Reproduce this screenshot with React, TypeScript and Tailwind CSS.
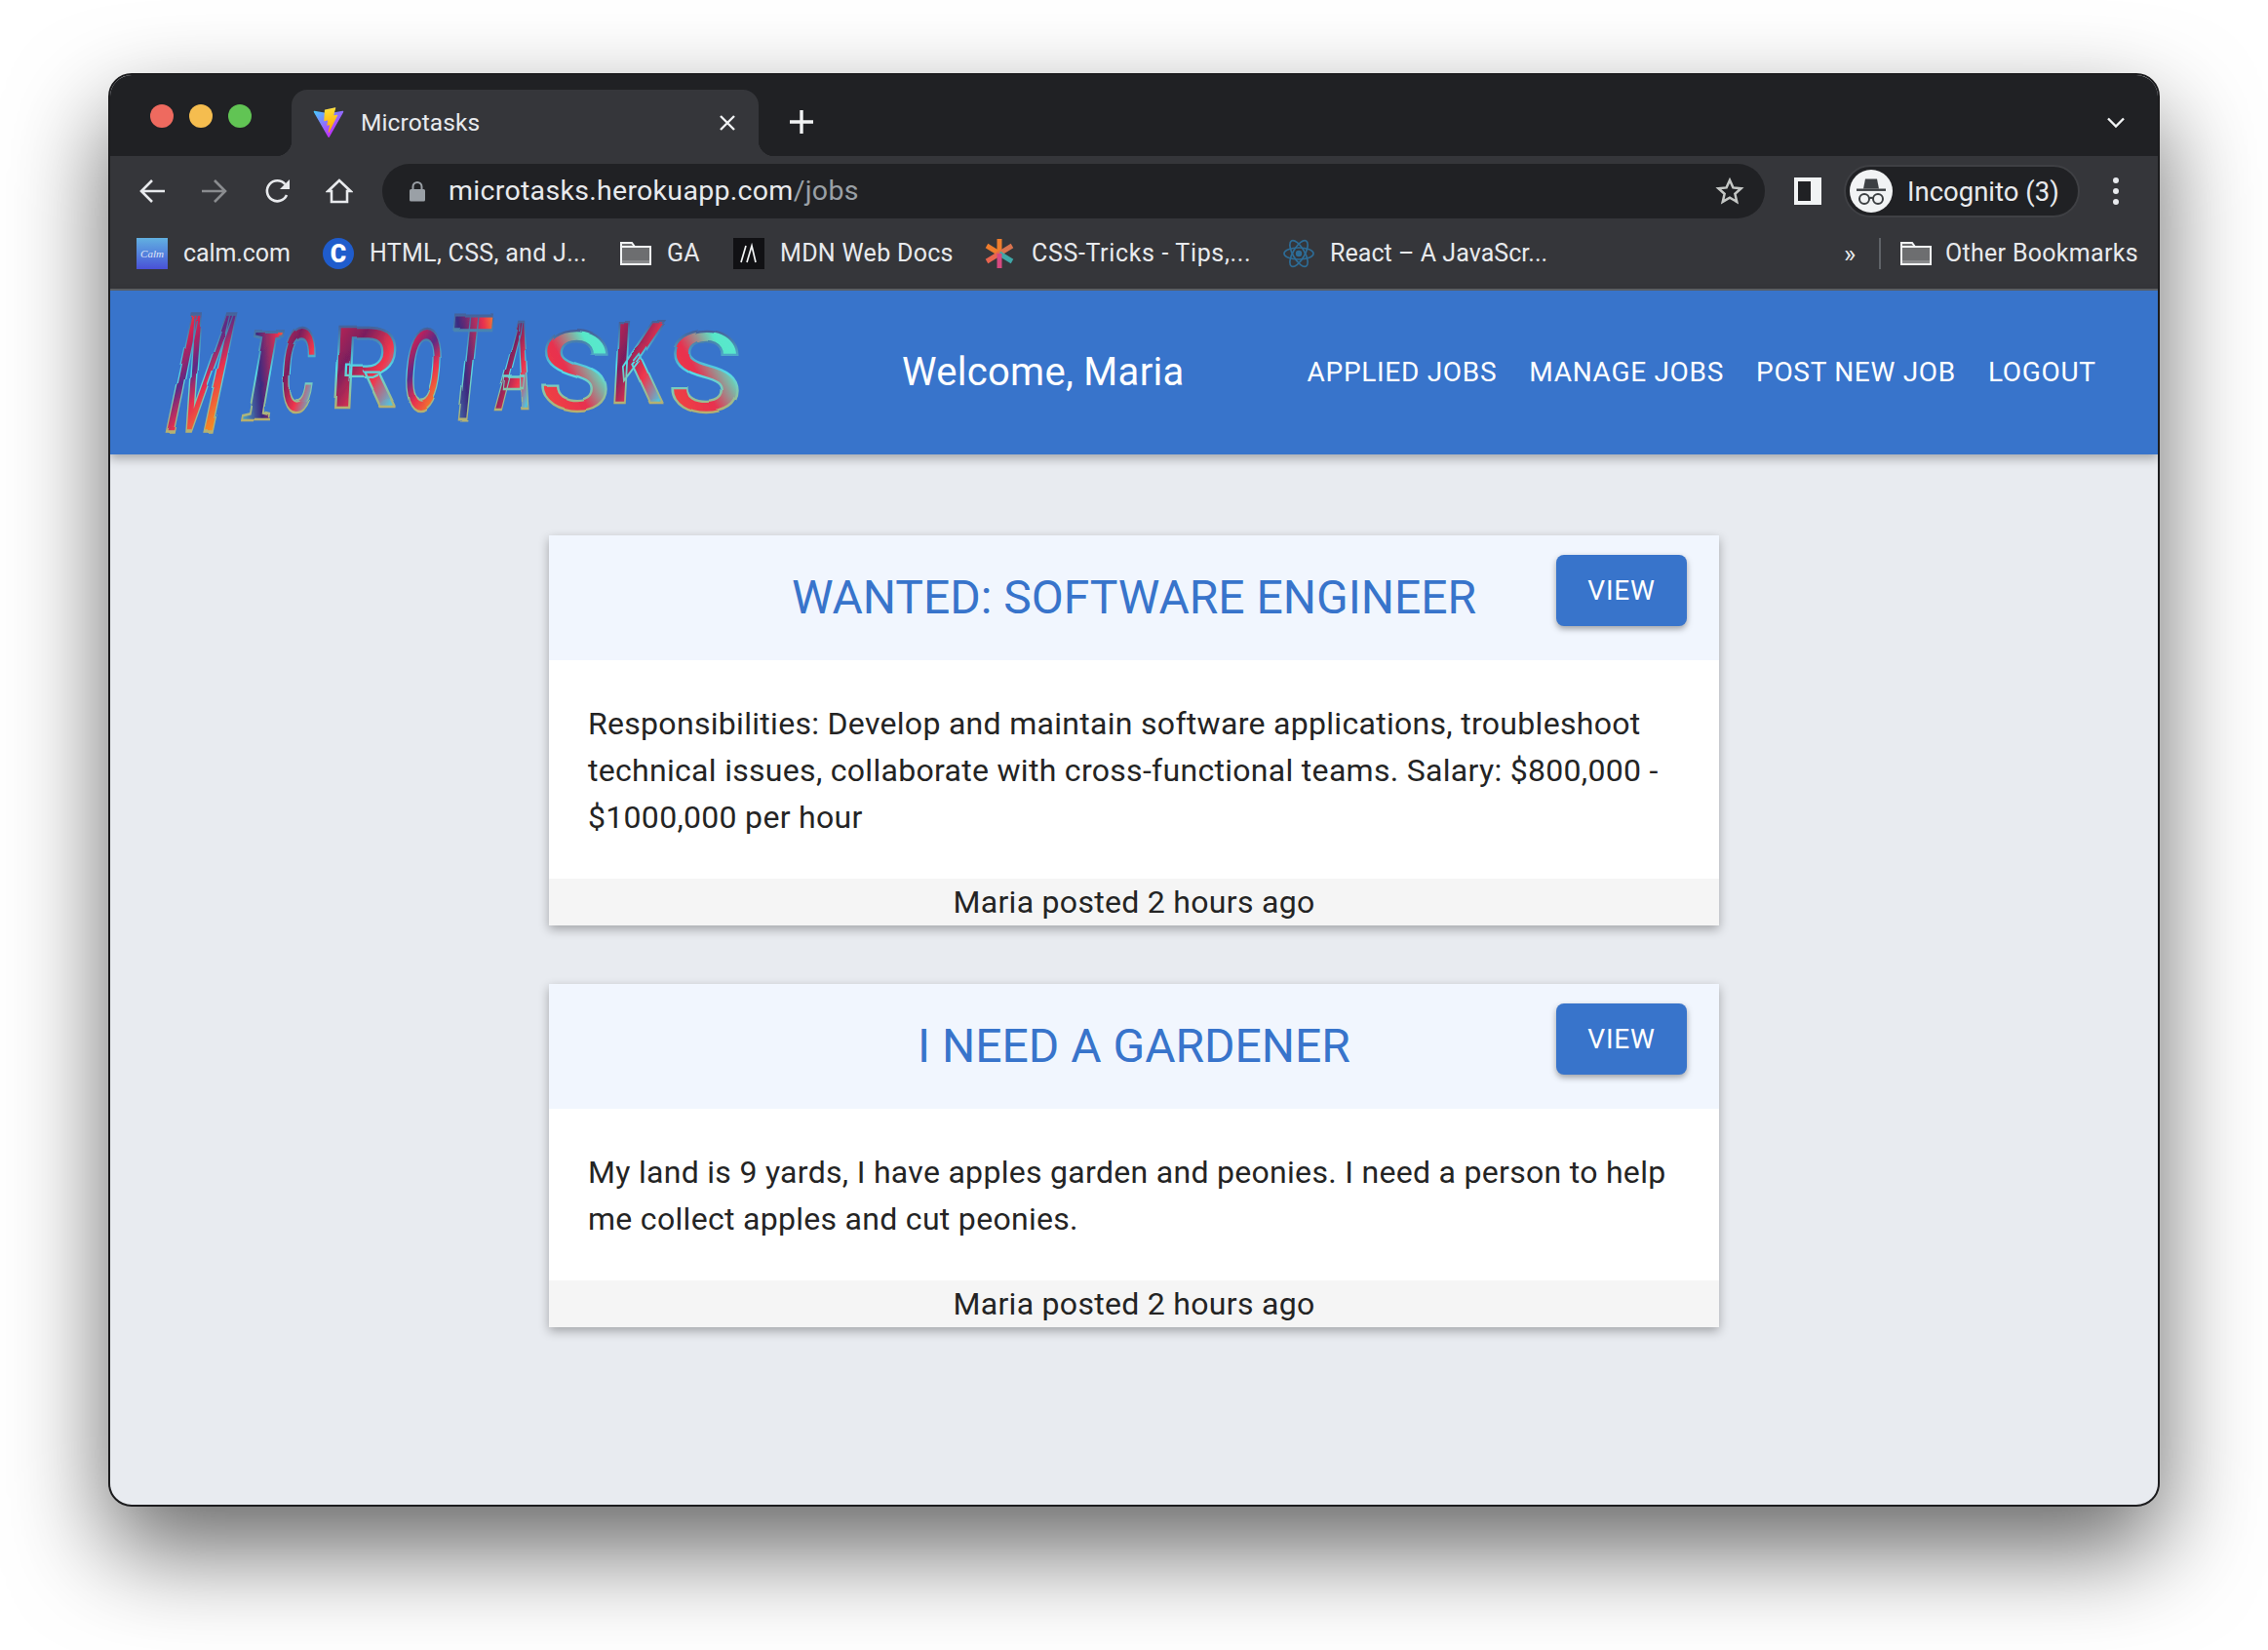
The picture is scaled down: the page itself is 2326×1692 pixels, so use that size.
const letters = [
  { ch: "M", x0: 0, x1: 81, y0: 0, y1: 120, adv: 0.87, skew: 12, fill: "url(#brushA)" },
  { ch: "I", x0: 78, x1: 125, y0: 11, y1: 108, adv: 0.33, skew: 10, fill: "url(#brushB)", serif: true },
  { ch: "C", x0: 119, x1: 161, y0: 15, y1: 100, adv: 0.65, skew: 4, fill: "url(#brushC)" },
  { ch: "R", x0: 170, x1: 245, y0: 13, y1: 96, adv: 0.62, skew: 3, fill: "url(#brushC)" },
  { ch: "O", x0: 245, x1: 292, y0: 16, y1: 98, adv: 0.69, skew: 5, fill: "url(#brushA)" },
  { ch: "T", x0: 288, x1: 340, y0: 1, y1: 108, adv: 0.6, skew: 6, fill: "url(#brushB)" },
  { ch: "A", x0: 341, x1: 386, y0: 8, y1: 98, adv: 0.65, skew: 6, fill: "url(#brushC)" },
  { ch: "S", x0: 387, x1: 458, y0: 18, y1: 98, adv: 0.59, skew: 0, fill: "url(#brushD)" },
  { ch: "K", x0: 458, x1: 517, y0: 8, y1: 91, adv: 0.63, skew: 3, fill: "url(#brushC)" },
  { ch: "S", x0: 518, x1: 593, y0: 18, y1: 100, adv: 0.59, skew: 0, fill: "url(#brushD)" },
];

function BrushLogo() {
  return (
    <svg
      width="593"
      height="120"
      viewBox="0 0 593 120"
      className="shrink-0 overflow-visible"
      role="img"
      aria-label="MICROTASKS"
    >
      <defs>
        <linearGradient id="brushA" x1="0" y1="0" x2="0.5" y2="1">
          <stop offset="0" stopColor="#f7941e" />
          <stop offset="0.25" stopColor="#d9204f" />
          <stop offset="0.5" stopColor="#5b2a86" />
          <stop offset="0.7" stopColor="#e8304f" />
          <stop offset="1" stopColor="#f7941e" />
        </linearGradient>
        <linearGradient id="brushB" x1="0" y1="1" x2="1" y2="0">
          <stop offset="0" stopColor="#52e3ec" />
          <stop offset="0.45" stopColor="#3b2a80" />
          <stop offset="0.75" stopColor="#e8304f" />
          <stop offset="1" stopColor="#f9b51e" />
        </linearGradient>
        <linearGradient id="brushC" x1="0" y1="0" x2="1" y2="1">
          <stop offset="0" stopColor="#e0274f" />
          <stop offset="0.35" stopColor="#7a1f5e" />
          <stop offset="0.6" stopColor="#f0364c" />
          <stop offset="0.85" stopColor="#4fc4e0" />
          <stop offset="1" stopColor="#2d2a6a" />
        </linearGradient>
        <linearGradient id="brushD" x1="1" y1="0" x2="0" y2="1">
          <stop offset="0" stopColor="#5fe6dc" />
          <stop offset="0.3" stopColor="#57e8c8" />
          <stop offset="0.55" stopColor="#e8304f" />
          <stop offset="0.85" stopColor="#f0453f" />
          <stop offset="1" stopColor="#6b1f80" />
        </linearGradient>
        <linearGradient id="brushEdgeLine" x1="0" y1="0" x2="0" y2="1">
          <stop offset="0" stopColor="#3c1f6e" />
          <stop offset="0.5" stopColor="#55dbe8" />
          <stop offset="1" stopColor="#f7941e" />
        </linearGradient>
        <filter id="brushEdge" x="-5%" y="-5%" width="110%" height="110%">
          <feTurbulence type="fractalNoise" baseFrequency="0.02" numOctaves="2" seed="4" />
          <feDisplacementMap in="SourceGraphic" scale="4" />
        </filter>
      </defs>
      <g filter="url(#brushEdge)">
        {letters.map((l, i) => {
          const h = l.y1 - l.y0;
          const shift = h * Math.tan((l.skew * Math.PI) / 180);
          const sx = (l.x1 - l.x0 - shift) / (l.adv * 100);
          const sy = h / 71.1;
          return (
            <text
              key={i}
              x="0"
              y="0"
              fontSize="100"
              fontWeight={l.serif ? 700 : 500}
              fontFamily={l.serif ? "Liberation Serif, serif" : "Roboto, sans-serif"}
              fill={l.fill}
              stroke="url(#brushEdgeLine)"
              strokeWidth="2"
              transform={`translate(${l.x0} ${l.y1}) skewX(${-l.skew}) scale(${sx} ${sy})`}
            >
              {l.ch}
            </text>
          );
        })}
      </g>
    </svg>
  );
}

function ViteIcon() {
  return (
    <svg width="32" height="32" viewBox="0 0 410 404" fill="none">
      <defs>
        <linearGradient id="viteA" x1="6" y1="33" x2="235" y2="344" gradientUnits="userSpaceOnUse">
          <stop stopColor="#41D1FF" />
          <stop offset="1" stopColor="#BD34FE" />
        </linearGradient>
        <linearGradient id="viteB" x1="194" y1="8" x2="236" y2="292" gradientUnits="userSpaceOnUse">
          <stop stopColor="#FFEA83" />
          <stop offset="0.08" stopColor="#FFDD35" />
          <stop offset="1" stopColor="#FFA800" />
        </linearGradient>
      </defs>
      <path
        d="M399.641 59.5246L215.643 388.545C211.844 395.338 202.084 395.378 198.228 388.618L10.5817 59.5563C6.38087 52.1896 12.6802 43.2665 21.0281 44.7586L205.223 77.6824C206.398 77.8924 207.601 77.8904 208.776 77.6763L389.119 44.8058C397.439 43.2894 403.768 52.1434 399.641 59.5246Z"
        fill="url(#viteA)"
      />
      <path
        d="M292.965 1.5744L156.801 28.2552C154.563 28.6937 152.906 30.5903 152.771 32.8664L144.395 174.33C144.198 177.662 147.258 180.248 150.51 179.498L188.42 170.749C191.967 169.931 195.172 173.055 194.443 176.622L183.18 231.775C182.422 235.487 185.907 238.661 189.532 237.56L212.947 230.446C216.577 229.344 220.065 232.527 219.297 236.242L201.398 322.875C200.278 328.294 207.486 331.249 210.492 326.603L212.5 323.5L323.454 102.072C325.312 98.3645 322.108 94.137 318.036 94.9228L279.014 102.454C275.347 103.161 272.227 99.746 273.262 96.1583L298.731 7.86689C299.767 4.27314 296.636 0.855181 292.965 1.5744Z"
        fill="url(#viteB)"
      />
    </svg>
  );
}

function ArrowIcon({ dir, color }: { dir: "left" | "right"; color: string }) {
  return (
    <svg width="28" height="26" viewBox="0 0 28 26" fill="none" stroke={color} strokeWidth="2.6">
      {dir === "left" ? <path d="M27 13H3M14 2 3 13l11 11" /> : <path d="M1 13h24M14 2l11 11-11 11" />}
    </svg>
  );
}

function ReloadIcon() {
  return (
    <svg width="28" height="28" viewBox="0 0 28 28" fill="none">
      <path d="M23 18a10.5 10.5 0 1 1-1.6-11" stroke="#e8eaed" strokeWidth="2.6" />
      <path d="M26 2v10H16z" fill="#e8eaed" />
    </svg>
  );
}

function HomeIcon() {
  return (
    <svg width="28" height="28" viewBox="0 0 28 28" fill="none" stroke="#e8eaed" strokeWidth="2.6">
      <path d="M14 3 2.5 14H6v11h16V14h3.5z" strokeLinejoin="miter" />
    </svg>
  );
}

function LockIcon() {
  return (
    <svg width="16" height="21" viewBox="0 0 16 21" fill="#9aa0a6">
      <path d="M1.5 8h13a1.5 1.5 0 0 1 1.5 1.5V19a1.5 1.5 0 0 1-1.5 1.5h-13A1.5 1.5 0 0 1 0 19V9.5A1.5 1.5 0 0 1 1.5 8z" />
      <path d="M3.5 9V5.5a4.5 4.5 0 0 1 9 0V9" fill="none" stroke="#9aa0a6" strokeWidth="2" />
    </svg>
  );
}

function StarIcon() {
  return (
    <svg width="30" height="30" viewBox="0 0 24 24" fill="none" stroke="#c4c7c5" strokeWidth="2">
      <path d="m12 3 2.7 6.1 6.6.7-5 4.4 1.5 6.5-5.8-3.4-5.8 3.4 1.5-6.5-5-4.4 6.6-.7z" />
    </svg>
  );
}

function IncognitoIcon() {
  return (
    <svg width="44" height="44" viewBox="0 0 44 44">
      <circle cx="22" cy="22" r="22" fill="#f1f3f4" />
      <path d="M14 19.5 16 9.5h12l2 10z" fill="#3c4043" />
      <rect x="7" y="19.5" width="30" height="2.4" fill="#3c4043" />
      <circle cx="15" cy="30" r="5" fill="none" stroke="#3c4043" strokeWidth="2" />
      <circle cx="29" cy="30" r="5" fill="none" stroke="#3c4043" strokeWidth="2" />
      <path d="M20 29.5c1.3-1 2.7-1 4 0" fill="none" stroke="#3c4043" strokeWidth="2" />
    </svg>
  );
}

function FolderIcon() {
  return (
    <svg width="32" height="24" viewBox="0 0 32 24">
      <path d="M1 1h11l3 4h16v18H1z" fill="#6d6e70" stroke="#f1f3f4" strokeWidth="2" />
      <path d="M1 5h14" stroke="#f1f3f4" strokeWidth="2" />
      <path d="M2 19h28v3H2z" fill="#8a8b8d" />
    </svg>
  );
}

function CalmIcon() {
  return (
    <span className="flex h-[32px] w-[32px] items-center justify-center bg-gradient-to-b from-[#62b0e0] to-[#4a4fd6] font-['Liberation_Serif',serif] text-[11px] italic text-white/80">
      Calm
    </span>
  );
}

function CoderIcon() {
  return (
    <span className="flex h-[32px] w-[32px] items-center justify-center rounded-full bg-[#1f5ccc] text-[25px] font-black leading-none text-white">
      C
    </span>
  );
}

function MdnIcon() {
  return (
    <svg width="32" height="32" viewBox="0 0 32 32">
      <rect width="32" height="32" fill="#111114" />
      <path d="M8 25 13 8M14 25 19 8 23 25" stroke="#f1f3f4" strokeWidth="1.7" fill="none" />
    </svg>
  );
}

function AsteriskIcon() {
  return (
    <svg width="30" height="32" viewBox="0 0 30 32" strokeWidth="5" fill="none">
      <path d="M15 16V1" stroke="#ef7d2d" />
      <path d="M15 16 2 8" stroke="#ef7d2d" />
      <path d="M15 16 28 8" stroke="#d9734f" />
      <path d="M15 16 2 24" stroke="#e8644f" />
      <path d="M15 16 28 24" stroke="#3fa7a8" />
      <path d="M15 16v15" stroke="#d6497f" />
    </svg>
  );
}

function ReactIcon() {
  return (
    <svg width="32" height="32" viewBox="-16 -16 32 32" fill="none" stroke="#2d6c96" strokeWidth="1.7">
      <circle r="3.2" fill="#2d6c96" stroke="none" />
      <ellipse rx="15" ry="6" />
      <ellipse rx="15" ry="6" transform="rotate(60)" />
      <ellipse rx="15" ry="6" transform="rotate(120)" />
    </svg>
  );
}

function Bookmark({
  icon,
  label,
  className,
  labelClass = "tracking-[0.3px]",
}: {
  icon: React.ReactNode;
  label: string;
  className: string;
  labelClass?: string;
}) {
  return (
    <div className={`flex items-center ${className}`}>
      {icon}
      <span className={`whitespace-nowrap ${labelClass}`}>{label}</span>
    </div>
  );
}

function BrowserChrome() {
  return (
    <div className="text-[#e8eaed]">
      <div className="flex h-[83px] items-end bg-[#202124]">
        <div className="flex h-full w-[186px] items-start gap-[16px] pl-[41px] pt-[30px]">
          <span className="h-[24px] w-[24px] rounded-full bg-[#ee6a5f]" />
          <span className="h-[24px] w-[24px] rounded-full bg-[#f5bd4f]" />
          <span className="h-[24px] w-[24px] rounded-full bg-[#61c454]" />
        </div>
        <div className="relative flex h-[68px] w-[479px] items-center rounded-t-[16px] bg-[#35363a] pl-[22px] pr-[23px]">
          <span className="absolute bottom-0 left-[-16px] h-[16px] w-[16px] bg-[radial-gradient(circle_at_0_0,#202124_16px,#35363a_16.5px)]" />
          <span className="absolute bottom-0 right-[-16px] h-[16px] w-[16px] bg-[radial-gradient(circle_at_100%_0,#202124_16px,#35363a_16.5px)]" />
          <ViteIcon />
          <span className="ml-[17px] text-[24.5px] tracking-[0.1px]">Microtasks</span>
          <svg className="ml-auto" width="18" height="18" viewBox="0 0 18 18" stroke="#f1f3f4" strokeWidth="2.4">
            <path d="M2 2l14 14M16 2 2 16" />
          </svg>
        </div>
        <div className="flex h-[68px] w-[88px] items-center justify-center pb-[2px]">
          <svg width="24" height="24" viewBox="0 0 24 24" stroke="#f1f3f4" strokeWidth="3.4">
            <path d="M12 0v24M0 12h24" />
          </svg>
        </div>
        <div className="ml-auto flex h-[68px] w-[88px] items-center justify-center pl-[2px]">
          <svg width="18" height="12" viewBox="0 0 18 12" fill="none" stroke="#f1f3f4" strokeWidth="2.4">
            <path d="m1 1.5 8 8 8-8" />
          </svg>
        </div>
      </div>

      <div className="flex h-[72px] items-start bg-[#35363a] pl-[11px] pt-[8px]">
        <div className="flex h-[56px] items-center">
          <div className="flex w-[64px] justify-center"><ArrowIcon dir="left" color="#e8eaed" /></div>
          <div className="flex w-[64px] justify-center"><ArrowIcon dir="right" color="#8a8c8f" /></div>
          <div className="flex w-[64px] justify-center pl-[2px]"><ReloadIcon /></div>
          <div className="flex w-[64px] justify-center"><HomeIcon /></div>
        </div>
        <div className="ml-[12px] flex h-[56px] w-[1418px] items-center rounded-full bg-[#202124] pl-[28px] pr-[21px]">
          <LockIcon />
          <span className="ml-[24px] pt-[1px] text-[28.5px] tracking-[0.3px]">
            microtasks.herokuapp.com<span className="text-[#9aa0a6]">/jobs</span>
          </span>
          <div className="ml-auto"><StarIcon /></div>
        </div>
        <div className="flex h-[56px] w-[81px] items-center justify-center pl-[6px]">
          <span className="flex h-[28px] w-[28px] justify-end border-[4px] border-[#f1f3f4] bg-[#202124]">
            <span className="h-full w-[7px] bg-[#f1f3f4]" />
          </span>
        </div>
        <div className="mt-[1px] flex h-[54px] w-[242px] items-center rounded-full border-2 border-[#3f4044] bg-[#202124] pl-[4px]">
          <IncognitoIcon />
          <span className="ml-[15px] whitespace-nowrap pt-[1px] text-[27.5px]">Incognito (3)</span>
        </div>
        <div className="flex h-[56px] w-[74px] flex-col items-center justify-center gap-[5px]">
          <span className="h-[6px] w-[6px] rounded-full bg-[#e8eaed]" />
          <span className="h-[6px] w-[6px] rounded-full bg-[#e8eaed]" />
          <span className="h-[6px] w-[6px] rounded-full bg-[#e8eaed]" />
        </div>
      </div>

      <div className="flex h-[64px] items-center bg-[#35363a] pb-[8px] pl-[27px] text-[25px]">
        <Bookmark className="w-[191px] gap-[16px]" icon={<CalmIcon />} label="calm.com" labelClass="tracking-[-0.1px]" />
        <Bookmark className="w-[305px] gap-[16px]" icon={<CoderIcon />} label="HTML, CSS, and J..." />
        <Bookmark className="w-[116px] gap-[16px]" icon={<FolderIcon />} label="GA" />
        <Bookmark className="w-[258px] gap-[16px]" icon={<MdnIcon />} label="MDN Web Docs" />
        <Bookmark className="w-[306px] gap-[18px]" icon={<AsteriskIcon />} label="CSS-Tricks - Tips,..." labelClass="tracking-[0.65px]" />
        <Bookmark className="w-[300px] gap-[16px]" icon={<ReactIcon />} label="React – A JavaScr..." labelClass="tracking-[0.05px]" />
        <span className="ml-[275px] w-[36px] text-[26px]">»</span>
        <span className="h-[32px] w-[2px] bg-[#5f6368]" />
        <Bookmark className="ml-[20px] gap-[14px]" icon={<FolderIcon />} label="Other Bookmarks" />
      </div>
      <div className="h-[2px] bg-[#5f6368]" />
    </div>
  );
}

function NavBar() {
  const links = ["APPLIED JOBS", "MANAGE JOBS", "POST NEW JOB", "LOGOUT"];
  return (
    <header className="relative z-10 flex h-[168px] items-center bg-[#3874cb] pl-[53px] text-white shadow-[0_4px_10px_rgba(0,0,0,0.3)]">
      <BrushLogo />
      <span className="ml-[166px] whitespace-nowrap text-[40px] tracking-[0.3px]">Welcome, Maria</span>
      <nav className="ml-[126px] flex gap-[33px]">
        {links.map((link) => (
          <a key={link} className="whitespace-nowrap text-[28px] tracking-[0.7px]">
            {link}
          </a>
        ))}
      </nav>
    </header>
  );
}

function JobCard({ title, children }: { title: string; children: React.ReactNode }) {
  return (
    <article className="w-[1200px] bg-white text-[32px] leading-[48px] tracking-[0.3px] text-[#242424] shadow-[0_4px_10px_rgba(0,0,0,0.3)]">
      <div className="grid h-[128px] grid-cols-[1fr_auto_1fr] items-center bg-[#f1f6fe]">
        <span />
        <h2 className="text-[48px] leading-[64px] tracking-normal text-[#3874cb]">{title}</h2>
        <div className="flex h-full items-start justify-end pr-[33px] pt-[20px]">
          <button className="h-[73px] w-[134px] rounded-[8px] bg-[#3874cb] text-[28px] tracking-[0.8px] text-white shadow-[0_3px_6px_rgba(0,0,0,0.35)]">
            VIEW
          </button>
        </div>
      </div>
      <div className="px-[40px] pb-[39px] pt-[41px]">{children}</div>
      <div className="h-[48px] bg-[#f5f5f5] text-center">Maria posted 2 hours ago</div>
    </article>
  );
}

export default function App() {
  return (
    <div className="h-[1692px] overflow-hidden bg-white pl-[111px] pt-[75px] font-[Roboto,sans-serif]">
      <div className="flex h-[1470px] w-[2104px] flex-col overflow-hidden rounded-[24px] border-2 border-[#1c1c1e] bg-[#e8ebf0] shadow-[0_44px_100px_rgba(0,0,0,0.6)]">
        <BrowserChrome />
        <NavBar />
        <main className="flex flex-col items-center gap-[60px] pt-[83px]">
          <JobCard title="WANTED: SOFTWARE ENGINEER">
            <p>Responsibilities: Develop and maintain software applications, troubleshoot</p>
            <p>technical issues, collaborate with cross-functional teams. Salary: $800,000 -</p>
            <p>$1000,000 per hour</p>
          </JobCard>
          <JobCard title="I NEED A GARDENER">
            <p>
              My land is 9 yards, I have apples garden and peonies. I need a person to help me collect apples and cut
              peonies.
            </p>
          </JobCard>
        </main>
      </div>
    </div>
  );
}
